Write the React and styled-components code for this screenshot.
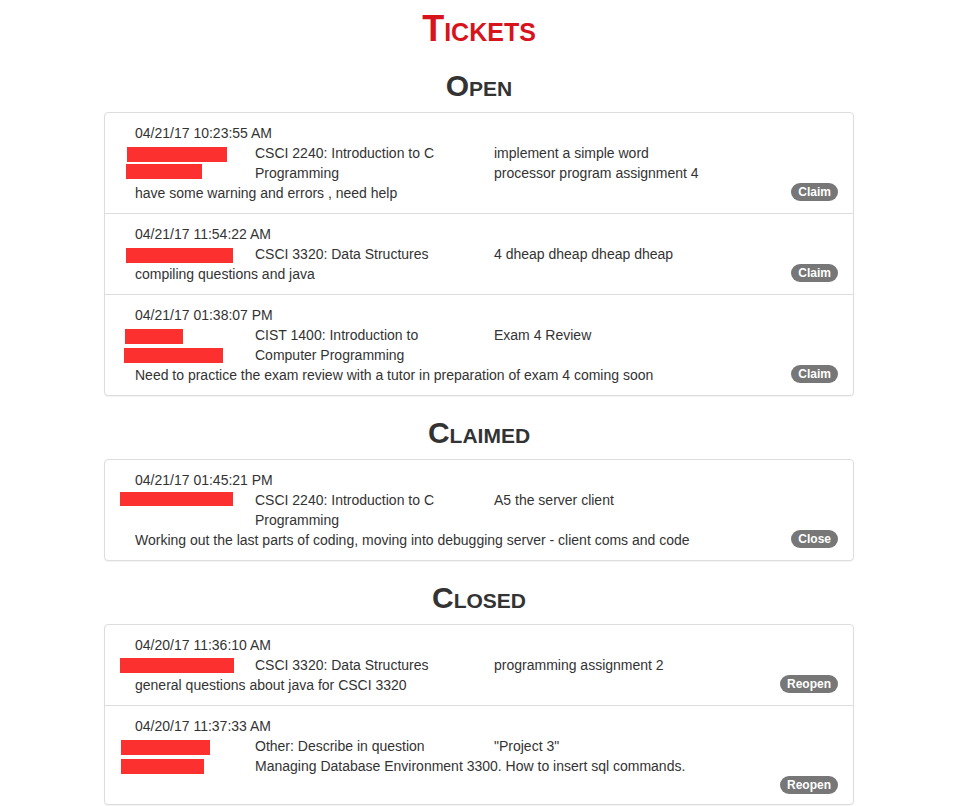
import React from "react";
import styled, { createGlobalStyle } from "styled-components";

const GlobalStyle = createGlobalStyle`
  html, body {
    margin: 0;
    padding: 0;
    background: #fff;
  }
  body {
    font-family: "Liberation Sans", Helvetica, Arial, sans-serif;
    font-size: 14px;
    line-height: 20px;
    color: #333;
  }
`;

const Page = styled.div`
  width: 750px;
  margin: 0 auto;
`;

const Title = styled.h1`
  margin: 9px 0 20px;
  font-size: 36px;
  line-height: 1.1;
  font-weight: 700;
  font-variant: small-caps;
  text-align: center;
  color: #d7141b;
`;

const SectionTitle = styled.h2`
  margin: 20px 0 10px;
  font-size: 30px;
  line-height: 1.1;
  font-weight: 700;
  font-variant: small-caps;
  text-align: center;
  color: #333;
`;

const List = styled.div`
  margin-bottom: 20px;
  border: 1px solid #ddd;
  border-radius: 4px;
  background: #fff;
  box-shadow: 0 1px 1px rgba(0, 0, 0, 0.05);
`;

const Item = styled.div`
  display: flow-root;
  padding: 10px 15px;
  & + & {
    border-top: 1px solid #ddd;
  }
`;

const DateLine = styled.div`
  padding-left: 15px;
`;

const NameCol = styled.div`
  float: left;
  width: 135px;
`;

const NameLine = styled.div`
  height: 20px;
  overflow: hidden;
`;

const Redact = styled.span`
  display: block;
  background: #fc302e;
  height: ${(p) => p.$h || 15}px;
  width: ${(p) => p.$w}px;
  margin-top: ${(p) => p.$top}px;
  margin-left: ${(p) => p.$left}px;
`;

const Main = styled.div`
  display: grid;
  grid-template-columns: 209px 210px;
  column-gap: 30px;
`;

const Cell = styled.div``;

const Badge = styled.span`
  float: right;
  clear: left;
  display: inline-block;
  margin-top: 0;
  padding: 3px 7px;
  font-size: 12px;
  font-weight: 700;
  line-height: 12px;
  color: #fff;
  background: #777;
  border-radius: 10px;
  white-space: nowrap;
`;

const Body = styled.div`
  padding-left: 15px;
`;

const Ticket = ({ date, names, course, desc, body, action }) => (
  <Item>
    <DateLine>{date}</DateLine>
    <NameCol>
      {names.map((n, i) => (
        <NameLine key={i}>
          <Redact $w={n.w} $top={n.top} $left={n.left} $h={n.h} />
        </NameLine>
      ))}
    </NameCol>
    <Main>
      <Cell>{course}</Cell>
      <Cell>{desc}</Cell>
    </Main>
    <Badge>{action}</Badge>
    <Body>{body}</Body>
  </Item>
);

const open = [
  {
    date: "04/21/17 10:23:55 AM",
    names: [
      { left: 7, top: 4, w: 100, h: 15 },
      { left: 6, top: 1, w: 76, h: 15 },
    ],
    course: "CSCI 2240: Introduction to C Programming",
    desc: "implement a simple word processor program assignment 4",
    body: "have some warning and errors , need help",
    action: "Claim",
  },
  {
    date: "04/21/17 11:54:22 AM",
    names: [{ left: 6, top: 4, w: 107, h: 15 }],
    course: "CSCI 3320: Data Structures",
    desc: "4 dheap dheap dheap dheap",
    body: "compiling questions and java",
    action: "Claim",
  },
  {
    date: "04/21/17 01:38:07 PM",
    names: [
      { left: 5, top: 4, w: 58, h: 15 },
      { left: 4, top: 3, w: 99, h: 15 },
    ],
    course: "CIST 1400: Introduction to Computer Programming",
    desc: "Exam 4 Review",
    body: "Need to practice the exam review with a tutor in preparation of exam 4 coming soon",
    action: "Claim",
  },
];

const claimed = [
  {
    date: "04/21/17 01:45:21 PM",
    names: [{ left: 0, top: 2, w: 113, h: 14 }],
    course: "CSCI 2240: Introduction to C Programming",
    desc: "A5 the server client",
    body: "Working out the last parts of coding, moving into debugging server - client coms and code",
    action: "Close",
  },
];

const closed = [
  {
    date: "04/20/17 11:36:10 AM",
    names: [{ left: 0, top: 3, w: 114, h: 15 }],
    course: "CSCI 3320: Data Structures",
    desc: "programming assignment 2",
    body: "general questions about java for CSCI 3320",
    action: "Reopen",
  },
  {
    date: "04/20/17 11:37:33 AM",
    names: [
      { left: 1, top: 4, w: 89, h: 15 },
      { left: 1, top: 3, w: 83, h: 15 },
    ],
    course: "Other: Describe in question",
    desc: "\"Project 3\"",
    body: "Managing Database Environment 3300. How to insert sql commands.",
    action: "Reopen",
  },
];

const Section = ({ title, tickets }) => (
  <>
    <SectionTitle>{title}</SectionTitle>
    <List>
      {tickets.map((t, i) => (
        <Ticket key={i} {...t} />
      ))}
    </List>
  </>
);

export default function App() {
  return (
    <>
      <GlobalStyle />
      <Page>
        <Title>Tickets</Title>
        <Section title="Open" tickets={open} />
        <Section title="Claimed" tickets={claimed} />
        <Section title="Closed" tickets={closed} />
      </Page>
    </>
  );
}
